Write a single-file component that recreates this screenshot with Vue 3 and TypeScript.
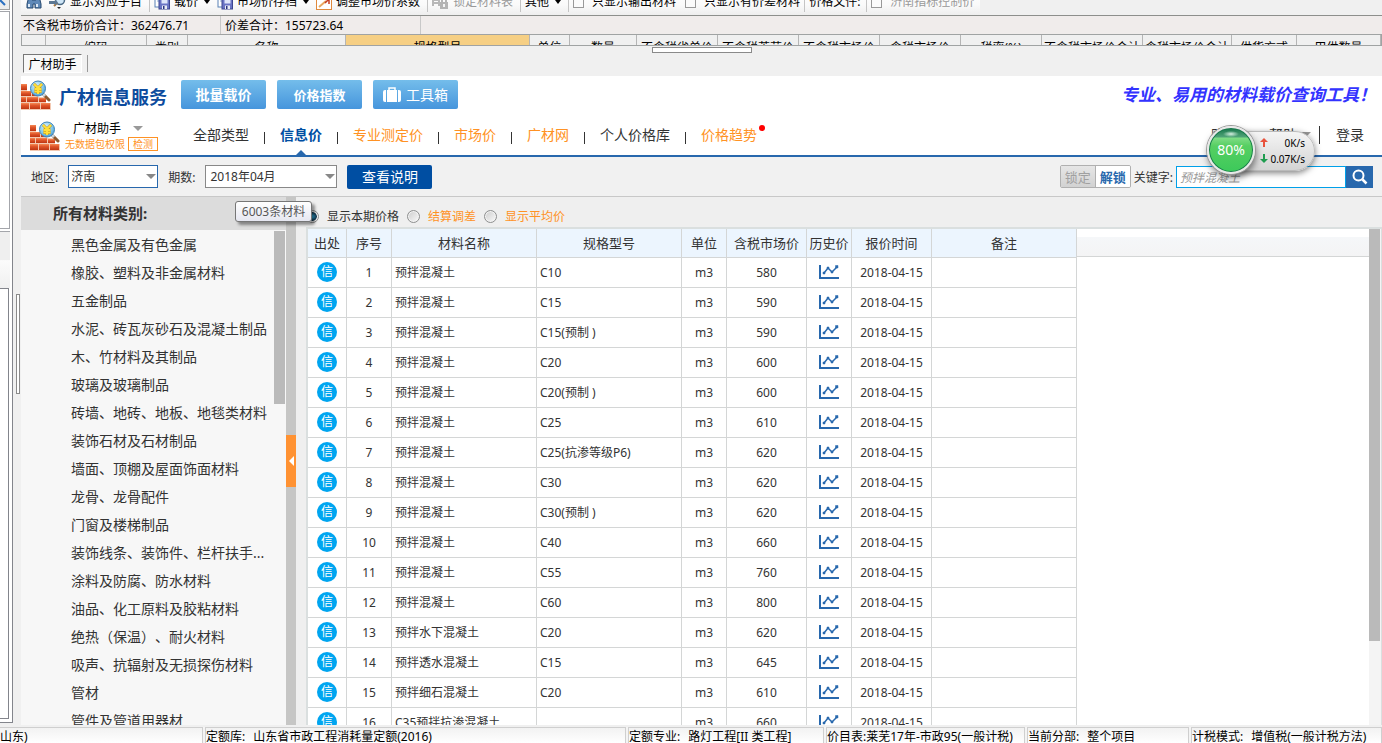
<script setup lang="ts">
import { ref } from 'vue'

interface Material {
  name: string
  spec: string
  price: number
}

interface NavItem {
  label: string
  tone: 'dark' | 'active' | 'orange'
  dot?: boolean
}

interface StatusCell {
  label: string
  value: string
}

const region = ref('济南')
const period = ref('2018年04月')
const mode = ref('current')
const keyword = ref('')

const navItems: NavItem[] = [
  { label: '全部类型', tone: 'dark' },
  { label: '信息价', tone: 'active' },
  { label: '专业测定价', tone: 'orange' },
  { label: '市场价', tone: 'orange' },
  { label: '广材网', tone: 'orange' },
  { label: '个人价格库', tone: 'dark' },
  { label: '价格趋势', tone: 'orange', dot: true },
]

const sheetColumns: string[] = [
  '', '编码', '类别', '名称', '规格型号', '单位', '数量', '不含税省单价', '不含税莱芜价', '不含税市场价',
  '含税市场价', '税率(%)', '不含税市场价合计', '含税市场价合计', '供货方式', '甲供数量',
]

const categories: string[] = [
  '黑色金属及有色金属', '橡胶、塑料及非金属材料', '五金制品', '水泥、砖瓦灰砂石及混凝土制品', '木、竹材料及其制品',
  '玻璃及玻璃制品', '砖墙、地砖、地板、地毯类材料', '装饰石材及石材制品', '墙面、顶棚及屋面饰面材料', '龙骨、龙骨配件',
  '门窗及楼梯制品', '装饰线条、装饰件、栏杆扶手...', '涂料及防腐、防水材料', '油品、化工原料及胶粘材料',
  '绝热（保温）、耐火材料', '吸声、抗辐射及无损探伤材料', '管材', '管件及管道用器材',
]

const priceColumns: string[] = ['出处', '序号', '材料名称', '规格型号', '单位', '含税市场价', '历史价', '报价时间', '备注']

const materials: Material[] = [
  { name: '预拌混凝土', spec: 'C10', price: 580 },
  { name: '预拌混凝土', spec: 'C15', price: 590 },
  { name: '预拌混凝土', spec: 'C15(预制 )', price: 590 },
  { name: '预拌混凝土', spec: 'C20', price: 600 },
  { name: '预拌混凝土', spec: 'C20(预制 )', price: 600 },
  { name: '预拌混凝土', spec: 'C25', price: 610 },
  { name: '预拌混凝土', spec: 'C25(抗渗等级P6)', price: 620 },
  { name: '预拌混凝土', spec: 'C30', price: 620 },
  { name: '预拌混凝土', spec: 'C30(预制 )', price: 620 },
  { name: '预拌混凝土', spec: 'C40', price: 660 },
  { name: '预拌混凝土', spec: 'C55', price: 760 },
  { name: '预拌混凝土', spec: 'C60', price: 800 },
  { name: '预拌水下混凝土', spec: 'C20', price: 620 },
  { name: '预拌透水混凝土', spec: 'C15', price: 645 },
  { name: '预拌细石混凝土', spec: 'C20', price: 610 },
  { name: 'C35预拌抗渗混凝土', spec: '', price: 660 },
]

const statusCells: StatusCell[] = [
  { label: '', value: '山东)' },
  { label: '定额库:', value: '山东省市政工程消耗量定额(2016)' },
  { label: '定额专业:', value: '路灯工程[II 类工程]' },
  { label: '', value: '价目表:莱芜17年-市政95(一般计税)' },
  { label: '当前分部:', value: '整个项目' },
  { label: '计税模式:', value: '增值税(一般计税方法)' },
]
</script>

<template>
  <div class="app">
    <svg class="defs" aria-hidden="true">
      <defs>
        <linearGradient id="brick" x1="0" y1="0" x2="0" y2="1">
          <stop offset="0" stop-color="#f58a55" />
          <stop offset="0.4" stop-color="#e0562a" />
          <stop offset="1" stop-color="#bd3512" />
        </linearGradient>
        <radialGradient id="lens" cx="0.4" cy="0.3" r="0.8">
          <stop offset="0" stop-color="#d8f1fc" />
          <stop offset="0.6" stop-color="#7cc4ea" />
          <stop offset="1" stop-color="#3c93cf" />
        </radialGradient>
        <symbol id="bricks" viewBox="0 0 30 30">
          <path d="M0 4h6v7h11v6h8v6h5v7H0z" fill="#f3c9b2" />
          <rect x="0" y="4" width="6" height="6" fill="url(#brick)" />
          <rect x="0" y="11" width="10" height="5" fill="url(#brick)" />
          <rect x="11" y="12" width="5" height="4" fill="url(#brick)" />
          <rect x="0" y="17" width="5" height="5" fill="url(#brick)" />
          <rect x="6" y="17" width="11" height="5" fill="url(#brick)" />
          <rect x="18" y="18" width="7" height="4" fill="url(#brick)" />
          <rect x="0" y="23" width="8" height="6" fill="url(#brick)" />
          <rect x="9" y="23" width="10" height="6" fill="url(#brick)" />
          <rect x="20" y="23" width="9" height="6" fill="url(#brick)" />
          <path d="M22 14 L28 20" stroke="#8c5a30" stroke-width="3" stroke-linecap="round" />
          <path d="M22 14 L24 16" stroke="#c9d5dd" stroke-width="3" />
          <circle cx="17" cy="8.500" r="7.500" fill="url(#lens)" stroke="#3f83b5" stroke-width="1" />
          <path d="M13 4 L17 8 L21 4 M17 8 V14 M13.500 9 H20.500 M13.500 11.500 H20.500" fill="none" stroke="#b98a10" stroke-width="2.800" />
          <path d="M13 4 L17 8 L21 4 M17 8 V14 M13.500 9 H20.500 M13.500 11.500 H20.500" fill="none" stroke="#ffe03a" stroke-width="2" />
        </symbol>
        <symbol id="disk" viewBox="0 0 16 16">
          <rect x="1" y="0" width="9" height="13" fill="#fff" stroke="#5a82b5" />
          <path d="M3 3h5M3 5h5M3 7h3" stroke="#8fb0d8" />
          <rect x="5" y="5" width="10.500" height="10" fill="#6a74c4" stroke="#3d4690" />
          <rect x="7.500" y="5.500" width="6" height="4" fill="#dfe6fa" />
          <rect x="8" y="11.500" width="5" height="3.500" fill="#e9ecf5" />
          <rect x="9" y="12" width="1.500" height="3" fill="#2b3480" />
        </symbol>
      </defs>
    </svg>

    <div class="workspace">
      <aside class="dock">
        <div class="dock-frame">
          <div class="dock-head">
            <svg width="10" height="9" viewBox="0 0 10 9"><path d="M0 0 L5 5" stroke="#2a6fc0" stroke-width="2" /></svg>
          </div>
          <div class="dock-list"></div>
          <div class="dock-mid"></div>
          <div class="dock-detail"></div>
        </div>
        <div class="dock-grip"></div>
      </aside>

      <main class="main">
        <div class="toolbar">
          <div class="toolbar-row">
            <button class="tool" type="button" aria-label="查找">
              <svg width="16" height="16" viewBox="0 0 16 16">
                <path d="M3 2h3v4h4V2h3l2 8v4H9v-4H7v4H1v-4z" fill="#5f89b8" stroke="#27486f" />
                <path d="M3 10v3M11 10v3" stroke="#dce9f7" stroke-width="2" />
              </svg>
            </button>
            <button class="tool" type="button">
              <svg width="17" height="16" viewBox="0 0 17 16">
                <circle cx="11" cy="6" r="4.500" fill="#cfe6f7" stroke="#4c6b86" stroke-width="1.500" />
                <path d="M8 9 L5 12" stroke="#b07a3a" stroke-width="2" />
                <path d="M0 7h6v-2l3 3.500-3 3.500v-2H0z" fill="#5d7893" />
                <path d="M8 13l2 2 2-2z" fill="#222" />
              </svg>
              <span>显示对应子目</span>
            </button>
            <i class="bar"></i>
            <button class="tool" type="button">
              <svg width="16" height="16"><use href="#disk" /></svg><span>载价</span><i class="caret"></i>
            </button>
            <button class="tool" type="button">
              <svg width="16" height="16"><use href="#disk" /></svg><span>市场价存档</span><i class="caret"></i>
            </button>
            <button class="tool" type="button">
              <svg width="16" height="16" viewBox="0 0 16 16">
                <rect x="0.500" y="1.500" width="15" height="14" fill="#fff" stroke="#e08a3c" />
                <path d="M3 13 L10 7" stroke="#e8a860" stroke-width="2" />
                <path d="M8 5h5v5M13 5l-4 4" fill="none" stroke="#c63a1e" stroke-width="1.500" />
              </svg>
              <span>调整市场价系数</span>
            </button>
            <i class="bar"></i>
            <button class="tool disabled" type="button" disabled>
              <svg width="17" height="16" viewBox="0 0 17 16">
                <path d="M1 12V6h6v6M1 9h6" fill="none" stroke="#b8b8b8" stroke-width="2" />
                <rect x="8" y="8" width="8" height="7" fill="#b4b4b4" />
                <path d="M10 8V5h4v3" fill="none" stroke="#b4b4b4" stroke-width="2" />
                <path d="M12 10v3" stroke="#f4f4f4" stroke-width="2" />
              </svg>
              <span>锁定材料表</span>
            </button>
            <i class="bar"></i>
            <button class="tool" type="button"><span>其他</span><i class="caret"></i></button>
            <i class="bar"></i>
            <label class="check"><input type="checkbox" /><span>只显示输出材料</span></label>
            <label class="check"><input type="checkbox" /><span>只显示有价差材料</span></label>
            <i class="bar"></i>
            <span class="file-label">价格文件:</span>
            <i class="bar"></i>
            <label class="check disabled"><input type="checkbox" disabled /><span>济南指标控制价</span></label>
          </div>
        </div>

        <div class="summary">
          <span>不含税市场价合计：362476.71</span>
          <span>价差合计：155723.64</span>
        </div>

        <div class="sheet">
          <table>
            <colgroup>
              <col v-for="(c, i) in sheetColumns" :key="i" :class="'s' + i" />
            </colgroup>
            <thead>
              <tr>
                <th v-for="(c, i) in sheetColumns" :key="i" :class="{ picked: i === 4 }">{{ c }}</th>
              </tr>
            </thead>
          </table>
        </div>

        <div class="tabstrip">
          <div class="split-grip"></div>
          <button class="tab" type="button">广材助手</button>
        </div>

        <section class="panel">
          <header class="brand">
            <svg class="logo" width="30" height="30"><use href="#bricks" /></svg>
            <h1>广材信息服务</h1>
            <button class="big" type="button">批量载价</button>
            <button class="big small" type="button">价格指数</button>
            <button class="big thin" type="button">
              <svg width="18" height="16" viewBox="0 0 18 16">
                <path d="M6 3V1h6v2" fill="none" stroke="#fff" stroke-width="1.500" />
                <path d="M2 3h1v12H2a2 2 0 0 1-2-2V5a2 2 0 0 1 2-2zM4 3h10v12H4zM15 3h1a2 2 0 0 1 2 2v8a2 2 0 0 1-2 2h-1z" fill="#fff" />
              </svg>
              <span>工具箱</span>
            </button>
            <p class="slogan">专业、易用的材料载价查询工具！</p>
          </header>

          <nav class="nav">
            <div class="account">
              <svg width="30" height="30"><use href="#bricks" /></svg>
              <div class="account-text">
                <div class="account-name">广材助手<i class="arrow"></i></div>
                <div class="account-note">无数据包权限<button type="button">检测</button></div>
              </div>
            </div>
            <ul>
              <li v-for="item in navItems" :key="item.label">
                <a href="#" :class="item.tone">{{ item.label }}<i v-if="item.dot" class="dot"></i></a>
              </li>
            </ul>
            <div class="links">
              <a href="#">购买<i class="arrow"></i></a>
              <a href="#">帮助<i class="arrow"></i></a>
              <a href="#" class="login">登录</a>
            </div>
            <div class="monitor">
              <div class="speeds">
                <div>
                  <svg width="8" height="10" viewBox="0 0 8 10"><path d="M4 0L8 4H5V9H3V4H0z" fill="#e8523c" /></svg><span>0K/s</span>
                </div>
                <div>
                  <svg width="8" height="10" viewBox="0 0 8 10"><path d="M4 9L8 5H5V0H3V5H0z" fill="#1f9d50" /></svg><span>0.07K/s</span>
                </div>
              </div>
              <div class="ball">80%</div>
            </div>
          </nav>

          <form class="filters" @submit.prevent>
            <label for="region">地区:</label>
            <span class="pick region">
              <select id="region" v-model="region"><option>济南</option></select>
            </span>
            <label for="period">期数:</label>
            <span class="pick period">
              <select id="period" v-model="period"><option>2018年04月</option></select>
            </span>
            <button class="explain" type="button">查看说明</button>
            <div class="search">
              <div class="locks">
                <button type="button" disabled>锁定</button>
                <button type="button">解锁</button>
              </div>
              <label for="keyword">关键字:</label>
              <input id="keyword" v-model="keyword" type="text" placeholder="预拌混凝土" />
              <button class="go" type="submit" aria-label="搜索">
                <svg width="16" height="16" viewBox="0 0 16 16">
                  <circle cx="6.500" cy="6.500" r="5" fill="none" stroke="#fff" stroke-width="2" />
                  <path d="M10.500 10.500L14.500 14.500" stroke="#fff" stroke-width="2.500" />
                </svg>
              </button>
            </div>
          </form>

          <div class="content">
            <aside class="side">
              <h2>所有材料类别:</h2>
              <div class="side-body">
                <ul>
                  <li v-for="c in categories" :key="c">{{ c }}</li>
                </ul>
                <div class="side-thumb"></div>
              </div>
              <div class="tip">6003条材料</div>
            </aside>
            <div class="gutter">
              <button type="button" aria-label="收起">
                <svg width="5" height="10" viewBox="0 0 5 10"><path d="M5 0V10L0 5z" fill="#fff" /></svg>
              </button>
            </div>

            <div class="results">
              <div class="modes">
                <label><input v-model="mode" type="radio" value="current" /><span>显示本期价格</span></label>
                <label class="orange"><input v-model="mode" type="radio" value="settle" /><span>结算调差</span></label>
                <label class="orange"><input v-model="mode" type="radio" value="average" /><span>显示平均价</span></label>
              </div>
              <div class="grid">
                <table class="prices">
                  <colgroup>
                    <col v-for="(c, i) in priceColumns" :key="i" :class="'p' + i" />
                  </colgroup>
                  <thead>
                    <tr>
                      <th v-for="c in priceColumns" :key="c">{{ c }}</th>
                    </tr>
                  </thead>
                  <tbody>
                    <tr v-for="(m, i) in materials" :key="i">
                      <td><span class="badge">信</span></td>
                      <td>{{ i + 1 }}</td>
                      <td class="left">{{ m.name }}</td>
                      <td class="left">{{ m.spec }}</td>
                      <td>m3</td>
                      <td>{{ m.price }}</td>
                      <td>
                        <svg class="trend" width="20" height="16" viewBox="0 0 20 16">
                          <path d="M1 1V14H20" fill="none" stroke="#2868ad" stroke-width="2" />
                          <path d="M5 9L9 4L13 8L18 3" fill="none" stroke="#2868ad" stroke-width="1.500" />
                          <path d="M4 8h2v2H4zM8 3h2v2H8zM12 7h2v2h-2zM16.500 1.500h2.500v2.500h-2.500z" fill="#2868ad" stroke="#2868ad" stroke-width="0.500" />
                        </svg>
                      </td>
                      <td>2018-04-15</td>
                      <td></td>
                    </tr>
                  </tbody>
                </table>
                <div class="filler"></div>
                <div class="track"><div class="thumb"></div></div>
              </div>
            </div>
          </div>
        </section>
      </main>
    </div>

    <footer class="status">
      <div v-for="(s, i) in statusCells" :key="i" class="status-cell">
        <span v-if="s.label">{{ s.label }}</span><span>{{ s.value }}</span>
      </div>
    </footer>
  </div>
</template>

<style>
body {
  margin: 0;
  overflow: hidden;
}
</style>

<style scoped>
.app,
.app button,
.app input,
.app select {
  font-family: "Noto Sans", "Noto Sans CJK SC", sans-serif;
}
.app {
  display: flex;
  flex-direction: column;
  height: 100vh;
  overflow: hidden;
  background: #f0f0f0;
  color: #333;
  font-size: 12px;
  line-height: 16px;
  text-spacing-trim: space-all;
}
.app * {
  box-sizing: border-box;
}
.app button {
  padding: 0;
  border: 0;
  background: none;
  color: inherit;
  font-size: inherit;
  line-height: inherit;
  white-space: nowrap;
}
svg {
  display: block;
  flex: none;
}
.defs {
  position: absolute;
  width: 0;
  height: 0;
}
ul {
  margin: 0;
  padding: 0;
  list-style: none;
}
a {
  color: inherit;
  text-decoration: none;
}
table {
  border-collapse: separate;
  border-spacing: 0;
  table-layout: fixed;
}
.workspace {
  display: flex;
  flex: 1;
  min-height: 0;
}

/* docked window at the left edge */
.dock {
  display: flex;
  flex: none;
  width: 21px;
  align-items: center;
}
.dock-frame {
  display: flex;
  flex-direction: column;
  width: 13px;
  height: calc(100% - 2px);
  align-self: flex-start;
  padding: 0 2px 3px 0;
  border-right: 1px solid #83858c;
  border-bottom: 1px solid #83858c;
  background: #fff;
}
.dock-head {
  flex: none;
  height: 10px;
  border: 1px solid #a0a0a0;
  border-left: 0;
  border-top: 0;
  background: #ececec;
}
.dock-list {
  flex: none;
  height: 218px;
  margin-top: 1px;
  border: 1px solid #a4a6ab;
  border-left: 0;
  background: #fff;
}
.dock-mid {
  flex: none;
  height: 57px;
  margin-top: 2px;
  border-top: 1px solid #a4a6ab;
  background: linear-gradient(#efefef 50%, #fbfbfb 51%, #f0f0f0);
}
.dock-detail {
  flex: 1;
  width: 9px;
  border: 1px solid #83858c;
  border-left: 0;
}
.dock-grip {
  width: 4px;
  height: 100px;
  margin: 0 0 38px 3px;
  border: 1px solid #8a8a8a;
  background: #fff;
}

.main {
  display: flex;
  flex: 1;
  flex-direction: column;
  min-width: 0;
}

/* toolbar, its upper half scrolled out of view */
.toolbar {
  display: flex;
  flex: none;
  height: 16px;
  align-items: flex-end;
  overflow: hidden;
  border-bottom: 1px solid #8d8f8c;
}
.toolbar-row {
  display: flex;
  flex: none;
  height: 26px;
  padding: 0 2px 0 5px;
  align-items: center;
  background: linear-gradient(#fff, #fafafa 60%, #eee);
  color: #000;
}
.tool,
.check {
  display: flex;
  align-items: center;
  gap: 4px;
  margin-right: 7px;
}
.tool .caret {
  margin-left: 2px;
}
.caret {
  border: 3px solid transparent;
  border-top: 4px solid #000;
  border-bottom: 0;
}
.bar {
  width: 1px;
  height: 20px;
  margin-right: 4px;
  background: #c4c4c4;
}
.toolbar .disabled {
  color: #999;
}
.check {
  gap: 8px;
  margin-right: 4px;
}
.check + .check {
  margin-left: 5px;
}
.check input {
  flex: none;
  width: 11px;
  height: 11px;
  margin: 0;
  appearance: none;
  border: 1px solid #999;
  background: #fbfbfb;
}
.file-label {
  margin-right: 6px;
}

.summary {
  display: flex;
  flex: none;
  height: 18px;
  background: #f0eceb;
  color: #000;
}
.summary span {
  width: 200px;
  padding: 2px 2px 0;
  border-right: 1px solid #c8c8c8;
}
.summary span + span {
  padding-left: 4px;
}

.sheet {
  flex: none;
  height: 12px;
  overflow: hidden;
  border: 1px solid #a0a3a3;
}
.sheet table {
  width: 100%;
}
.sheet th {
  height: 22px;
  padding: 4px 0 0;
  overflow: hidden;
  border-right: 1px solid #b5b5b5;
  background: #f0f0f0;
  color: #000;
  font-weight: 400;
  line-height: 16px;
  white-space: nowrap;
}
.sheet .picked {
  background: #f6cf84;
}
.s0 { width: 24px; }
.s1 { width: 101px; }
.s2 { width: 41px; }
.s3 { width: 158px; }
.s4 { width: 184px; }
.s5 { width: 40px; }
.s6 { width: 67px; }
.s7, .s8, .s9, .s10, .s11 { width: 81px; }
.s12 { width: 101px; }
.s13 { width: 89px; }
.s14 { width: 65px; }

.tabstrip {
  display: flex;
  flex: none;
  flex-direction: column;
  height: 30px;
}
.split-grip {
  width: 100px;
  height: 6px;
  margin: 1px auto 0;
  border: 1px solid #8a8a8a;
  background: #fff;
}
.app .tab {
  align-self: flex-start;
  width: 59px;
  height: 19px;
  margin: 1px 0 0 2px;
  padding-top: 2px;
  border: 1px solid #777;
  border-right-color: #fff;
  border-bottom-color: #fff;
  background: #f8f8f8;
  box-shadow: 6px 0 0 -1px #f0f0f0, 7px 0 0 -1px #999;
  color: #000;
}

.panel {
  display: flex;
  flex: 1;
  flex-direction: column;
  min-height: 0;
  background: #fff;
}
.brand {
  display: flex;
  flex: none;
  height: 40px;
  padding-top: 4px;
  align-items: flex-start;
}
.brand h1 {
  margin: 4px 14px 0 8px;
  color: #0d4c9e;
  font-size: 18px;
  line-height: 26px;
}
.app .big {
  display: flex;
  width: 85px;
  height: 29px;
  margin-right: 11px;
  align-items: center;
  justify-content: center;
  gap: 5px;
  border-radius: 2px;
  background: linear-gradient(#74bdeb, #4695dc);
  color: #fff;
  font-size: 14px;
  font-weight: 700;
}
.app .small {
  font-size: 13px;
}
.app .thin {
  font-weight: 400;
}
.slogan {
  margin: 3px 6px 0 auto;
  color: #33f;
  font-size: 17px;
  font-style: italic;
  font-weight: 700;
  line-height: 24px;
}

.nav {
  position: relative;
  display: flex;
  flex: none;
  height: 41px;
  align-items: center;
  border-bottom: 2px solid #2868ad;
  font-size: 14px;
}
.account {
  display: flex;
  width: 157px;
  padding-left: 9px;
  align-items: center;
}
.account-text {
  padding-left: 5px;
}
.account-name {
  display: flex;
  padding-left: 8px;
  align-items: center;
  gap: 12px;
  color: #000;
  font-size: 12px;
  line-height: 16px;
}
.account-note {
  display: flex;
  align-items: center;
  gap: 3px;
  color: #ff9224;
  font-size: 10px;
  line-height: 14px;
  white-space: nowrap;
}
.account-note button {
  width: 30px;
  height: 14px;
  border: 1px solid #ff9224;
  line-height: 12px;
}
.arrow {
  border: 5px solid transparent;
  border-top-color: #999;
  border-bottom: 0;
}
.nav ul {
  display: flex;
  height: 39px;
}
.nav li {
  display: flex;
  align-items: center;
}
.nav li + li::before {
  width: 1px;
  height: 12px;
  margin-top: 4px;
  background: #333;
  content: "";
}
.nav li a {
  position: relative;
  padding: 0 15px 2px;
  line-height: 37px;
}
.nav .active {
  color: #004ea2;
  font-weight: 700;
}
.nav .active::after {
  position: absolute;
  bottom: 0;
  left: calc(50% - 5px);
  border: 5px solid transparent;
  border-top: 0;
  border-bottom-color: #2868ad;
  content: "";
}
.orange {
  color: #ff9224;
}
.dot {
  position: absolute;
  top: 9px;
  right: 7px;
  width: 6px;
  height: 6px;
  border-radius: 50%;
  background: red;
}
.links {
  display: flex;
  margin: 0 0 2px auto;
  padding-right: 18px;
  align-items: center;
}
.links a {
  display: flex;
  margin-right: 16px;
  align-items: center;
  gap: 4px;
}
.links a + a {
  margin-right: 8px;
}
.links .login {
  margin: 0;
}
.links .login::before {
  width: 1px;
  height: 18px;
  margin-right: 12px;
  background: #333;
  content: "";
}
.monitor {
  position: absolute;
  top: 10px;
  right: 67px;
  display: flex;
  width: 108px;
  height: 50px;
  align-items: center;
}
.speeds {
  display: flex;
  flex-direction: column;
  width: 84px;
  height: 40px;
  margin-left: auto;
  padding: 3px 9px 3px 28px;
  justify-content: space-around;
  border: 1px solid #bbb;
  border-radius: 0 20px 20px 0;
  background: linear-gradient(#f4f4f4, #d4d4d4);
  box-shadow: 0 2px 6px rgba(0, 0, 0, 0.5);
  color: #000;
  font-size: 10px;
  line-height: 14px;
}
.speeds div {
  display: flex;
  align-items: center;
  justify-content: space-between;
}
.ball {
  position: absolute;
  top: 0;
  left: 0;
  width: 48px;
  height: 48px;
  border: 2px solid #e8e8e8;
  border-radius: 50%;
  background: radial-gradient(ellipse 8px 3px at 50% 6px, #d7f0e2, transparent), linear-gradient(#1d7a50 1px, #4fa477 9px, #7fdc86 10px, #56cf62 18px, #3cc95a);
  box-shadow: 0 0 0 1px #999, inset 0 0 0 1px #187a4c, 1px 4px 7px rgba(0, 0, 0, 0.5);
  color: #fff;
  font-size: 14px;
  line-height: 44px;
  text-align: center;
}

.filters {
  display: flex;
  flex: none;
  height: 40px;
  padding: 8px 9px 0 10px;
  align-items: flex-start;
  border-bottom: 1px solid #c8c8c8;
  background: #f1f1f1;
}
.filters label {
  line-height: 25px;
  white-space: nowrap;
}
.pick {
  position: relative;
  height: 23px;
  margin: 0 10px;
}
.pick::after {
  position: absolute;
  top: 9px;
  right: 2px;
  border: 5px solid transparent;
  border-top-color: #888;
  border-bottom: 0;
  content: "";
  pointer-events: none;
}
.pick select {
  width: 100%;
  height: 100%;
  padding: 0 2px;
  appearance: none;
  border: 1px solid #888;
  border-radius: 0;
  background: #fff;
  color: #333;
  font-size: 12px;
}
.region {
  width: 90px;
}
.region select {
  border-color: #2868ad;
}
.period {
  width: 132px;
}
.period select {
  padding-left: 4px;
}
.app .explain {
  width: 85px;
  height: 24px;
  border-radius: 2px;
  background: #004ea2;
  color: #fff;
  font-size: 14px;
}
.search {
  display: flex;
  margin-left: auto;
}
.locks {
  display: flex;
  width: 71px;
  height: 23px;
  margin-right: 3px;
  overflow: hidden;
  border: 1px solid #b0b0b0;
  border-radius: 2px;
}
.locks button {
  flex: 1;
  background: #fff;
  color: #2868ad;
  font-size: 13px;
  font-weight: 700;
}
.locks button:disabled {
  border-right: 1px solid #b0b0b0;
  background: linear-gradient(#e6e6e6, #d2d2d2);
  color: #a0a0a0;
  font-weight: 400;
}
.search input {
  width: 170px;
  height: 22px;
  margin: 1px 0 0 3px;
  padding: 0 3px;
  border: 1px solid #00a0e9;
  background: #fff;
  font-size: 12px;
}
.search input::placeholder {
  color: #999;
  font-style: italic;
}
.app .go {
  display: flex;
  width: 27px;
  height: 22px;
  margin-top: 1px;
  align-items: center;
  justify-content: center;
  background: #2868ad;
}

.content {
  display: flex;
  flex: 1;
  min-height: 0;
}
.side {
  position: relative;
  display: flex;
  flex: none;
  flex-direction: column;
  width: 265px;
  background: #f7f7f7;
}
.side h2 {
  flex: none;
  height: 33px;
  margin: 0;
  padding-left: 32px;
  background: #dcdcdc;
  font-size: 15px;
  line-height: 33px;
}
.side-body {
  display: flex;
  flex: 1;
  min-height: 0;
  padding: 1px 1px 0 50px;
}
.side ul {
  flex: 1;
  overflow: hidden;
  font-size: 14px;
  line-height: 28px;
  white-space: nowrap;
}
.side-thumb {
  width: 11px;
  height: 35%;
  background: #bababa;
}
.tip {
  position: absolute;
  z-index: 2;
  top: 4px;
  right: -26px;
  width: 77px;
  height: 21px;
  border: 1px solid #767676;
  border-radius: 3px;
  background: linear-gradient(#fff, #e6e7f1);
  box-shadow: 3px 3px 3px rgba(0, 0, 0, 0.4);
  color: #575757;
  line-height: 19px;
  text-align: center;
}
.gutter {
  display: flex;
  flex: none;
  flex-direction: column;
  width: 10px;
  justify-content: center;
  background: #c6c6c5;
}
.gutter button {
  display: flex;
  width: 10px;
  height: 52px;
  align-items: center;
  justify-content: center;
  background: #ff9232;
}
.results {
  display: flex;
  flex: 1;
  flex-direction: column;
  min-width: 0;
  padding-left: 10px;
  background: #efefef;
}
.modes {
  display: flex;
  flex: none;
  height: 30px;
  padding-top: 8px;
}
.modes label {
  display: flex;
  height: 23px;
  margin-right: 8px;
  align-items: center;
  gap: 8px;
}
.modes input {
  width: 13px;
  height: 13px;
  margin: 0;
  appearance: none;
  border: 1px solid #8e8f8f;
  border-radius: 50%;
  background: linear-gradient(135deg, #ccc, #fafafa);
  box-shadow: inset 0 0 0 1px #f4f4f4;
}
.modes input:checked {
  background: radial-gradient(#2f9bc8 1px, #12344c 4px, #eee 5px);
}
.grid {
  display: flex;
  flex: 1;
  min-height: 0;
  overflow: hidden;
  align-items: flex-start;
  border: 2px solid #dadfdf;
  border-width: 2px 1px 0 2px;
  background: #fff;
}
.prices {
  flex: none;
  width: 769px;
}
.prices th,
.prices td {
  padding: 0;
  border-right: 1px solid #d4d6d6;
  border-bottom: 1px solid #d4d6d6;
  text-align: center;
  white-space: nowrap;
}
.prices th {
  height: 29px;
  background: #ecf5fe;
  font-size: 13px;
  font-weight: 400;
}
.prices td {
  height: 30px;
}
.prices .left {
  padding-left: 3px;
  text-align: left;
}
.p0 { width: 39px; }
.p1, .p4, .p6 { width: 45px; }
.p2, .p3, .p8 { width: 145px; }
.p5, .p7 { width: 80px; }
.badge {
  display: block;
  width: 20px;
  height: 20px;
  margin: 0 auto 2px;
  border-radius: 50%;
  background: #00a5f0;
  color: #fff;
  line-height: 20px;
}
.trend {
  margin: 0 auto 2px;
}
.filler {
  flex: 1;
  height: 28px;
  border-top: 8px solid #fff;
  border-bottom: 1px solid #d4d6d6;
  background: linear-gradient(#f5f7f9, #f4f4f5);
}
.track {
  width: 12px;
  height: 100%;
  background: #f4f4f4;
}
.thumb {
  width: 11px;
  height: 83%;
  background: #bababa;
}

.status {
  display: grid;
  flex: none;
  height: 16px;
  margin-top: 2px;
  grid-template-columns: 203px 421px 196px 199px 162px 1fr;
  column-gap: 2px;
  background: #f4f4f4;
}
.status-cell {
  display: flex;
  gap: 8px;
  overflow: hidden;
  border: 1px solid #cfcfcf;
  border-bottom: 0;
  background: linear-gradient(#f2f2f2, #fff);
  color: #000;
  line-height: 18px;
  white-space: nowrap;
}
.status-cell:first-child {
  border-left: 0;
}
</style>
